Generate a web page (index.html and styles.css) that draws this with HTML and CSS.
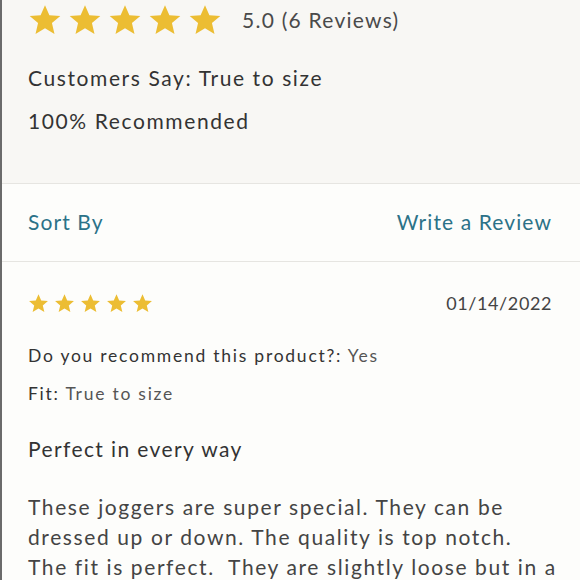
FILE: index.html
```html
<!DOCTYPE html>
<html>
<head>
<meta charset="utf-8">
<link rel="stylesheet" href="styles.css">
</head>
<body>
<div class="page">
  <section class="summary">
    <div class="rating-row">
      <div class="stars stars-big">
        <svg viewBox="0 0 24 24"><path d="M12 1.5l3.1 7.1 7.7.6-5.9 5 1.8 7.6L12 17.8l-6.7 4 1.8-7.6-5.9-5 7.7-.6z"/></svg>
        <svg viewBox="0 0 24 24"><path d="M12 1.5l3.1 7.1 7.7.6-5.9 5 1.8 7.6L12 17.8l-6.7 4 1.8-7.6-5.9-5 7.7-.6z"/></svg>
        <svg viewBox="0 0 24 24"><path d="M12 1.5l3.1 7.1 7.7.6-5.9 5 1.8 7.6L12 17.8l-6.7 4 1.8-7.6-5.9-5 7.7-.6z"/></svg>
        <svg viewBox="0 0 24 24"><path d="M12 1.5l3.1 7.1 7.7.6-5.9 5 1.8 7.6L12 17.8l-6.7 4 1.8-7.6-5.9-5 7.7-.6z"/></svg>
        <svg viewBox="0 0 24 24"><path d="M12 1.5l3.1 7.1 7.7.6-5.9 5 1.8 7.6L12 17.8l-6.7 4 1.8-7.6-5.9-5 7.7-.6z"/></svg>
      </div>
      <span class="score">5.0 (6 Reviews)</span>
    </div>
    <p class="summary-line first">Customers Say: True to size</p>
    <p class="summary-line">100% Recommended</p>
  </section>
  <nav class="toolbar">
    <a class="link">Sort By</a>
    <a class="link">Write a Review</a>
  </nav>
  <article class="review">
    <div class="review-head">
      <div class="stars stars-small">
        <svg viewBox="0 0 24 24"><path d="M12 1.5l3.1 7.1 7.7.6-5.9 5 1.8 7.6L12 17.8l-6.7 4 1.8-7.6-5.9-5 7.7-.6z"/></svg>
        <svg viewBox="0 0 24 24"><path d="M12 1.5l3.1 7.1 7.7.6-5.9 5 1.8 7.6L12 17.8l-6.7 4 1.8-7.6-5.9-5 7.7-.6z"/></svg>
        <svg viewBox="0 0 24 24"><path d="M12 1.5l3.1 7.1 7.7.6-5.9 5 1.8 7.6L12 17.8l-6.7 4 1.8-7.6-5.9-5 7.7-.6z"/></svg>
        <svg viewBox="0 0 24 24"><path d="M12 1.5l3.1 7.1 7.7.6-5.9 5 1.8 7.6L12 17.8l-6.7 4 1.8-7.6-5.9-5 7.7-.6z"/></svg>
        <svg viewBox="0 0 24 24"><path d="M12 1.5l3.1 7.1 7.7.6-5.9 5 1.8 7.6L12 17.8l-6.7 4 1.8-7.6-5.9-5 7.7-.6z"/></svg>
      </div>
      <span class="date">01/14/2022</span>
    </div>
    <p class="attr first"><span class="attr-label">Do you recommend this product?:</span> <span class="attr-value">Yes</span></p>
    <p class="attr"><span class="attr-label">Fit:</span> <span class="attr-value">True to size</span></p>
    <h3 class="review-title">Perfect in every way</h3>
    <p class="review-body">These joggers are super special. They can be dressed up or down. The quality is top notch.<br>The fit is perfect.&nbsp; They are slightly loose but in a good way and they look great with sneakers or heels.</p>
  </article>
</div>
</body>
</html>
```
FILE: styles.css
```css
html, body {
  margin: 0;
  padding: 0;
  background: #fdfdfb;
}
body {
  font-family: Lato, "Open Sans", sans-serif;
  height: 580px;
  overflow: hidden;
}
.page {
  border-left: 2px solid #6b6b6b;
  min-height: 580px;
  box-sizing: border-box;
}
.summary {
  background: #f8f7f4;
  height: 183px;
  border-bottom: 1px solid #e6e5e1;
  padding: 0 28px 0 26px;
}
.rating-row {
  display: flex;
  align-items: center;
  height: 40px;
}
.stars {
  display: flex;
}
.stars svg {
  fill: #ecbd33;
  display: block;
}
.stars-big {
  gap: 6px;
  margin-top: -1px;
}
.stars-big svg {
  width: 34px;
  height: 34px;
}
.score {
  margin-left: 20px;
  margin-top: -2px;
  font-size: 21px;
  color: #4a4a4a;
  letter-spacing: 1.25px;
}
.summary-line {
  margin: 0;
  font-size: 21px;
  color: #333;
  letter-spacing: 1.6px;
  line-height: 24px;
}
.summary-line.first {
  margin-top: 26px;
}
.summary-line + .summary-line {
  margin-top: 19px;
}
.toolbar {
  display: flex;
  justify-content: space-between;
  align-items: center;
  height: 74px;
  padding: 0 28px 3px 26px;
  border-bottom: 1px solid #e6e5e1;
}
.link {
  color: #2b7288;
  font-size: 21px;
  letter-spacing: 1.1px;
}
.review {
  padding: 0 28px 0 26px;
}
.review-head {
  display: flex;
  justify-content: space-between;
  align-items: center;
  height: 40px;
  margin-top: 21px;
}
.stars-small {
  gap: 5px;
}
.stars-small svg {
  width: 21px;
  height: 21px;
}
.date {
  font-size: 18px;
  color: #444;
  letter-spacing: 0.6px;
}
.attr {
  margin: 0;
  font-size: 17.5px;
  line-height: 22px;
  letter-spacing: 1.75px;
}
.attr.first {
  margin-top: 22px;
}
.attr + .attr {
  margin-top: 16px;
}
.attr-label {
  color: #333;
}
.attr-value {
  color: #555;
}
.review-title {
  margin: 32px 0 0;
  font-size: 21px;
  font-weight: normal;
  color: #333;
  letter-spacing: 1.4px;
  line-height: 24px;
}
.review-body {
  margin: 31px -10px 0 0;
  font-size: 21px;
  line-height: 30px;
  color: #444;
  letter-spacing: 1.6px;
}
```
